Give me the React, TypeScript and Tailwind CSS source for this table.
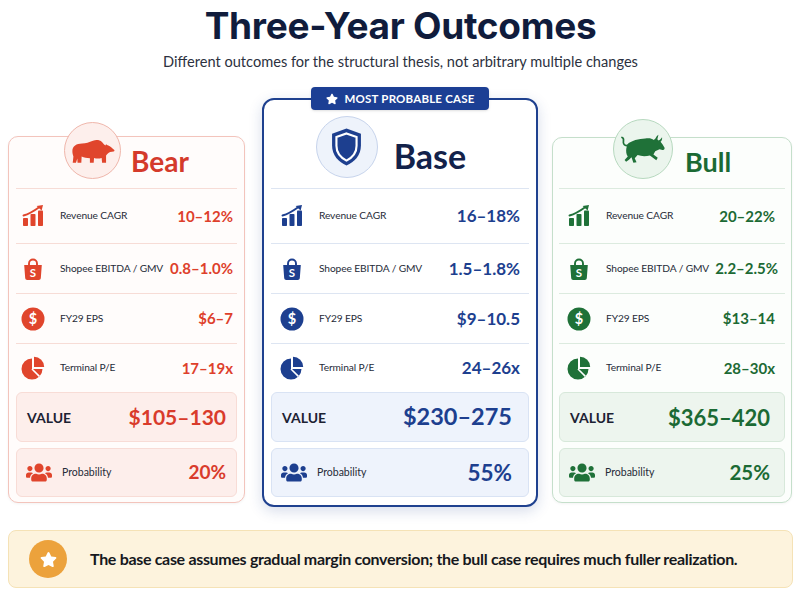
import React from 'react'
import { FaUsers, FaStar } from 'react-icons/fa'

type Theme = {
  card: string
  header: string
  circle: string
  title: string
  textMt: string
  sep: string
  rowPad: string
  rowValue: string
  accent: string
  box: string
  boxPr: string
  bigValue: string
  probValue: string
  px: string
}

const ChartIcon = ({ className }: { className?: string }) => (
  <svg viewBox="0 0 24 24" className={className} fill="currentColor">
    <rect x="2" y="14" width="5" height="8" rx="0.8" />
    <rect x="9.5" y="10" width="5" height="12" rx="0.8" />
    <rect x="17" y="6.5" width="5" height="15.5" rx="0.8" />
    <path d="M2.5 11.5 C8 10 13 7 18.5 3" stroke="currentColor" strokeWidth="1.9" fill="none" strokeLinecap="round" />
    <path d="M22 1 L15.6 1.9 L20.6 6.6 Z" />
  </svg>
)

const BagIcon = ({ className }: { className?: string }) => (
  <svg viewBox="0 0 24 24" className={className} fill="currentColor">
    <path d="M8 8.5 V6.5 a4 4 0 0 1 8 0 V8.5" stroke="currentColor" strokeWidth="1.9" fill="none" />
    <path d="M3.2 8 H20.8 L19.8 21.2 a2 2 0 0 1 -2 1.8 H6.2 a2 2 0 0 1 -2 -1.8 Z" />
    <text x="12" y="20" textAnchor="middle" fontSize="11.5" fontWeight="700" fill="white" fontFamily="Lato, 'Liberation Sans', sans-serif">
      S
    </text>
  </svg>
)

const DollarIcon = ({ className }: { className?: string }) => (
  <svg viewBox="0 0 24 24" className={className} fill="currentColor">
    <circle cx="12" cy="12" r="11.5" />
    <text x="12" y="17" textAnchor="middle" fontSize="14.5" fontWeight="700" fill="white" fontFamily="Lato, 'Liberation Sans', sans-serif">
      $
    </text>
  </svg>
)

const PieIcon = ({ className }: { className?: string }) => (
  <svg viewBox="0 0 24 24" className={className} fill="currentColor">
    <path d="M11 13 L11 2.5 A10.5 10.5 0 1 0 21.5 13 Z" />
    <path d="M13 11 L23.2 11 A10.2 10.2 0 0 0 13 0.8 Z" />
    <path d="M11 13 L18.4 20.4" stroke="white" strokeWidth="1.6" />
  </svg>
)

const BearIcon = ({ className }: { className?: string }) => (
  <svg viewBox="0 0 64 40" className={className} fill="currentColor">
    <path d="M2 20 C2 13 8 9 16 9 C22 9 26 7 32 5 C37 3.5 42 4 45 7 C47 9 48 11 50 12 L51 10.2 L53.2 11.5 C56 12 58 14 60 16 L63 18.5 C63.5 19.5 63 20.5 62 20.6 L57 21.5 C55 22.5 53 24 51 26.5 L51 37 L45.2 37 L44.6 30 C41 31 37 31 33.5 30 L33 37 L27.5 37 L27.5 30.5 C23 30.5 19 29.5 15.5 28 L15 37 L9.5 37 L9.2 31 L7.2 37 L2.5 37 L3.5 28 C2.5 25 2 23 2 20 Z" />
  </svg>
)

const BullIcon = ({ className }: { className?: string }) => (
  <svg viewBox="0 0 64 44" className={className} fill="currentColor">
    <path d="M11 17 C6 18 4 15 4.8 10.5 C5.2 8.2 4.5 6.5 2.8 6" stroke="currentColor" strokeWidth="2.4" fill="none" strokeLinecap="round" />
    <path d="M10 16 C15 10 27 8 35 7.5 C40 6.5 44 7 47 9.5 L49.5 7 C50.5 5 51.5 3.2 53.5 2 C53 4.2 52.5 6.3 52 8.6 L53.5 10 C55.5 9.2 57.3 7.7 58.5 5.5 C59 8.2 58 10.4 56.4 12 C58.4 14.4 60.4 17.3 62 20.4 C62.4 22.4 61.2 24 59 23.4 L55 22.4 C53 23.4 51 24.6 49 25 L46.5 29.5 L52.5 34 L50.5 37.5 L43 32 L41.5 31 C36 32.5 30 32.5 24.5 30.5 L20.5 35 L23 40.5 L18.6 41 L16 33.5 L12.5 37 L8.5 39.8 L6.4 37.4 L10.8 32.6 C8.6 29 8.2 25 8.8 21.2 Z" />
  </svg>
)

const ShieldIcon = ({ className }: { className?: string }) => (
  <svg viewBox="0 0 40 48" className={className} fill="currentColor">
    <path d="M20 1.5 L37.5 8 V22 C37.5 34.5 29.5 42.5 20 46.5 C10.5 42.5 2.5 34.5 2.5 22 V8 Z" />
    <path d="M20 7.5 L32.2 12 V22.5 C32.2 31.5 26.8 37 20 40.5 C13.2 37 7.8 31.5 7.8 22.5 V12 Z" stroke="white" strokeWidth="2.6" />
  </svg>
)

const themes: Record<string, Theme> = {
  bear: {
    card: 'w-[237px] mt-[38px] border border-[#f3c4bc] bg-[#fffcfb] rounded-[10px] shadow-[0_1px_3px_rgba(0,0,0,0.05)]',
    header: 'h-[51px] gap-[10px]',
    circle: 'w-[57px] h-[57px] -mt-[24px] bg-[#fdefec] border border-[#efb6ab]',
    title: 'text-[28px] text-[#d43a2b]',
    textMt: '-mt-[3px]',
    sep: 'border-[#f7dcd6]',
    rowPad: 'pl-[5px] pr-[4px]',
    rowValue: 'text-[15px] text-[#de3f2b]',
    accent: 'text-[#e0452c]',
    box: 'bg-[#fdeeeb] border border-[#f8dcd6]',
    boxPr: 'pr-[10px]',
    bigValue: 'text-[21px] text-[#d93b2b]',
    probValue: 'text-[19px] text-[#d93b2b]',
    px: 'px-[7px] pb-[5px]',
  },
  base: {
    card: 'w-[276px] border-2 border-[#1f418f] bg-white rounded-[12px] shadow-[0_4px_14px_rgba(30,60,140,0.18)]',
    header: 'h-[88px] pt-[6px] pr-[18px] gap-[16px]',
    circle: 'w-[62px] h-[62px] bg-[#eef3fb] border border-[#c7d4ec]',
    title: 'text-[34px] text-[#13224a]',
    textMt: 'mt-[18px]',
    sep: 'border-[#dde5f2]',
    rowPad: 'pl-[9px] pr-[9px]',
    rowValue: 'text-[17px] text-[#1d3f8f]',
    accent: 'text-[#1d3f8f]',
    box: 'bg-[#eef3fc] border border-[#d9e3f4]',
    boxPr: 'pr-[16px]',
    bigValue: 'text-[23.5px] text-[#1d3f8f]',
    probValue: 'text-[22.5px] text-[#1d3f8f]',
    px: 'px-[7px] pb-[8px]',
  },
  bull: {
    card: 'w-[240px] mt-[39px] border border-[#c5dfcb] bg-[#fcfefc] rounded-[10px] shadow-[0_1px_3px_rgba(0,0,0,0.05)]',
    header: 'h-[50px] gap-[12px]',
    circle: 'w-[60px] h-[60px] -mt-[28px] bg-[#ebf5ed] border border-[#b7d9bf]',
    title: 'text-[27px] text-[#1b6a34]',
    textMt: '-mt-[3px]',
    sep: 'border-[#dcebdf]',
    rowPad: 'pl-[8px] pr-[10px]',
    rowValue: 'text-[15px] text-[#1c6a34]',
    accent: 'text-[#1f7138]',
    box: 'bg-[#edf5ee] border border-[#d7e8da]',
    boxPr: 'pr-[14px]',
    bigValue: 'text-[22px] text-[#1b6a34]',
    probValue: 'text-[20.5px] text-[#1b6a34]',
    px: 'px-[6px] pb-[5px]',
  },
}

type CaseData = {
  key: 'bear' | 'base' | 'bull'
  name: string
  values: string[]
  value: string
  prob: string
}

const cases: CaseData[] = [
  { key: 'bear', name: 'Bear', values: ['10–12%', '0.8–1.0%', '$6–7', '17–19x'], value: '$105–130', prob: '20%' },
  { key: 'base', name: 'Base', values: ['16–18%', '1.5–1.8%', '$9–10.5', '24–26x'], value: '$230–275', prob: '55%' },
  { key: 'bull', name: 'Bull', values: ['20–22%', '2.2–2.5%', '$13–14', '28–30x'], value: '$365–420', prob: '25%' },
]

const labels = ['Revenue CAGR', 'Shopee EBITDA / GMV', 'FY29 EPS', 'Terminal P/E']
const icons = [ChartIcon, BagIcon, DollarIcon, PieIcon]
const rowHeights = ['h-[55px]', 'h-[50px]', 'h-[50px]', 'h-[49px]']

function CaseCard({ data }: { data: CaseData }) {
  const t = themes[data.key]
  return (
    <div className={`relative shrink-0 flex flex-col ${t.card} ${t.px}`}>
      {data.key === 'base' && (
        <div className="absolute left-1/2 -translate-x-1/2 -top-[13px] h-[23px] w-[178px] rounded-[4px] bg-[#1c3f94] flex items-center justify-center gap-[7px] text-white shadow-sm">
          <FaStar className="w-[12px] h-[12px]" />
          <span className="text-[11.5px] font-bold tracking-[0.2px]">MOST PROBABLE CASE</span>
        </div>
      )}
      <div className={`flex items-center justify-center ${t.header}`}>
        <div className={`shrink-0 rounded-full flex items-center justify-center ${t.circle}`}>
          {data.key === 'bear' && <BearIcon className={`w-[44px] h-[28px] ${t.accent}`} />}
          {data.key === 'base' && <ShieldIcon className={`w-[33px] h-[40px] ${t.accent}`} />}
          {data.key === 'bull' && <BullIcon className={`w-[46px] h-[32px] ${t.accent}`} />}
        </div>
        <span className={`font-bold leading-none ${t.title} ${t.textMt}`}>{data.name}</span>
      </div>
      {labels.map((label, i) => {
        const Icon = icons[i]
        return (
          <div key={label} className={`flex items-center border-t ${t.sep} ${rowHeights[i]} ${t.rowPad}`}>
            <Icon className={`w-[24px] h-[24px] shrink-0 ${t.accent}`} />
            <span className="ml-[15px] text-[10.2px] text-[#262b38] whitespace-nowrap tracking-[-0.1px]">{label}</span>
            <span className={`ml-auto pl-[6px] font-bold whitespace-nowrap ${t.rowValue}`}>{data.values[i]}</span>
          </div>
        )
      })}
      <div className={`flex items-center h-[50px] rounded-[6px] pl-[10px] ${t.boxPr} ${t.box}`}>
        <span className="text-[14px] font-bold text-[#1c2233]">VALUE</span>
        <span className={`ml-auto font-bold whitespace-nowrap ${t.bigValue}`}>{data.value}</span>
      </div>
      <div className={`flex items-center h-[49px] mt-[6px] rounded-[6px] pl-[9px] ${t.boxPr} ${t.box}`}>
        <FaUsers className={`w-[26px] h-[21px] shrink-0 ${t.accent}`} />
        <span className="ml-[10px] text-[10.5px] text-[#262b38]">Probability</span>
        <span className={`ml-auto font-bold whitespace-nowrap ${t.probValue}`}>{data.prob}</span>
      </div>
    </div>
  )
}

export default function App() {
  return (
    <div className="w-[801px] h-[598px] bg-white overflow-hidden font-['Lato','Liberation_Sans',sans-serif]">
      <div className="pt-[3px] flex flex-col items-center">
        <h1 className="font-['Inter','Liberation_Sans',sans-serif] text-[37px] leading-[46px] font-bold text-[#101c3c] tracking-[-0.3px]">Three-Year Outcomes</h1>
        <p className="mt-[3px] text-[14.6px] leading-[20px] text-[#2c3140]">
          Different outcomes for the structural thesis, not arbitrary multiple changes
        </p>
      </div>
      <div className="mt-[26px] flex items-start pl-[8px]">
        <CaseCard data={cases[0]} />
        <div className="ml-[17px]">
          <CaseCard data={cases[1]} />
        </div>
        <div className="ml-[14px]">
          <CaseCard data={cases[2]} />
        </div>
      </div>
      <div className="mt-[23px] mx-[8px] h-[58px] rounded-[8px] bg-[#fdf3dd] border border-[#f5e2b6] flex items-center pl-[20px]">
        <div className="w-[38px] h-[38px] rounded-full bg-[#eca23c] flex items-center justify-center shrink-0">
          <FaStar className="w-[17px] h-[17px] text-white" />
        </div>
        <span className="ml-[23px] text-[16px] font-bold text-[#16181d] whitespace-nowrap tracking-[-0.32px]">
          The base case assumes gradual margin conversion; the bull case requires much fuller realization.
        </span>
      </div>
    </div>
  )
}
